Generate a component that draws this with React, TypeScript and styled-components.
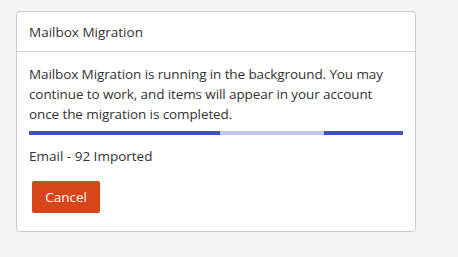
import React from "react";
import styled, { createGlobalStyle } from "styled-components";

const GlobalStyle = createGlobalStyle`
  html, body {
    margin: 0;
    padding: 0;
    background: #f3f3f3;
  }
  body {
    font-family: "Open Sans", "Noto Sans", sans-serif;
    color: #333333;
  }
`;

const Page = styled.div`
  padding: 11px 0 0 16px;
`;

const Card = styled.section`
  width: 400px;
  height: 221px;
  box-sizing: border-box;
  background: #ffffff;
  border: 1px solid #cbcbcb;
  border-radius: 4px;
  display: flex;
  flex-direction: column;
`;

const Header = styled.header`
  height: 40px;
  box-sizing: border-box;
  border-bottom: 1px solid #d4d4d4;
  padding: 0 12px;
  display: flex;
  align-items: center;
  font-size: 13.5px;
  color: #333333;
`;

const Body = styled.div`
  padding: 12px 12px 0 12px;
  display: flex;
  flex-direction: column;
`;

const Message = styled.p`
  margin: 0;
  font-size: 13.5px;
  line-height: 20px;
  letter-spacing: -0.1px;
`;

const Track = styled.div`
  margin-top: 7px;
  height: 4px;
  display: flex;
  background: #c5cae9;
`;

const Segment = styled.div<{ $on: boolean }>`
  height: 100%;
  background: ${(p) => (p.$on ? "#3f51b5" : "#c5cae9")};
`;

const Status = styled.div`
  margin-top: 11px;
  font-size: 13.5px;
  line-height: 20px;
`;

const CancelButton = styled.button`
  margin-top: 15px;
  margin-left: 3px;
  width: 68px;
  height: 32px;
  border: none;
  border-radius: 2px;
  background: #d84519;
  color: #ffffff;
  font-family: "Open Sans", "Noto Sans", sans-serif;
  font-size: 13.5px;
  cursor: pointer;
`;

const segments = [
  { w: 191, on: true },
  { w: 104, on: false },
  { w: 79, on: true },
];

export default function App() {
  const total = segments.reduce((s, x) => s + x.w, 0);
  return (
    <Page>
      <GlobalStyle />
      <Card>
        <Header>Mailbox Migration</Header>
        <Body>
          <Message>
            Mailbox Migration is running in the background. You may continue to
            work, and items will appear in your account once the migration is
            completed.
          </Message>
          <Track>
            {segments.map((s, i) => (
              <Segment
                key={i}
                $on={s.on}
                style={{ width: `${(s.w / total) * 100}%` }}
              />
            ))}
          </Track>
          <Status>Email - 92 Imported</Status>
          <div>
            <CancelButton>Cancel</CancelButton>
          </div>
        </Body>
      </Card>
    </Page>
  );
}
